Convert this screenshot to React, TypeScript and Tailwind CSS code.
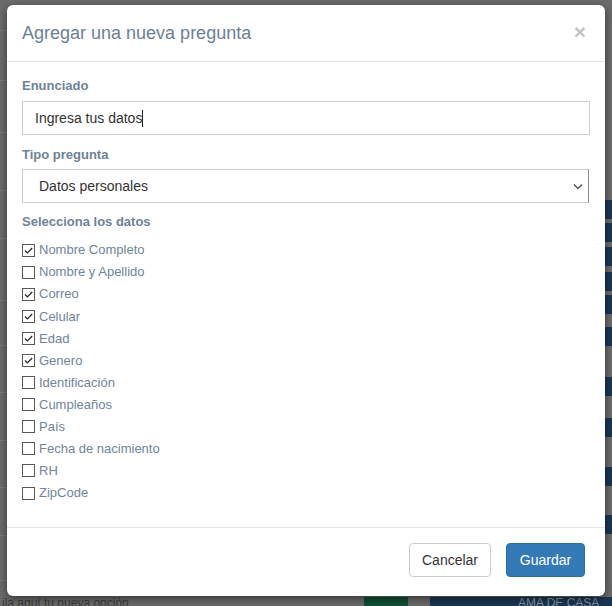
import { useState } from "react";

const campos = [
  { label: "Nombre Completo", checked: true },
  { label: "Nombre y Apellido", checked: false },
  { label: "Correo", checked: true },
  { label: "Celular", checked: true },
  { label: "Edad", checked: true },
  { label: "Genero", checked: true },
  { label: "Identificación", checked: false },
  { label: "Cumpleaños", checked: false },
  { label: "País", checked: false },
  { label: "Fecha de nacimiento", checked: false },
  { label: "RH", checked: false },
  { label: "ZipCode", checked: false },
];

// dark blue rows of the page behind the overlay (right edge)
const blueRows = [200, 223, 247, 272, 295, 327, 377, 418, 467, 515];
const leftRows = [30, 80, 132, 190, 238, 300, 345, 392, 440, 487, 535, 580];

function Checkbox({ checked }: { checked: boolean }) {
  return (
    <span className="w-[13px] h-[13px] border border-[#5a5a5a] bg-white flex items-center justify-center shrink-0">
      {checked && (
        <svg width="11" height="11" viewBox="0 0 11 11">
          <path d="M2 5.5 L4.4 7.9 L9.2 3" fill="none" stroke="#2a2a2a" strokeWidth="1.3" />
        </svg>
      )}
    </span>
  );
}

export default function App() {
  const [items, setItems] = useState(campos);

  return (
    <div
      className="relative w-[612px] h-[606px] overflow-hidden bg-[#6b6b6b]"
      style={{ fontFamily: '"Liberation Sans", Arial, sans-serif' }}
    >
      {/* Page behind the overlay */}
      {leftRows.map((y) => (
        <div key={y} className="absolute left-0 w-[10px] h-px bg-[#7a7a7a]" style={{ top: y }} />
      ))}
      {blueRows.map((y) => (
        <div key={y} className="absolute right-0 w-[8px] h-[19px] bg-[#1b3652]" style={{ top: y }} />
      ))}
      <div className="absolute left-0 bottom-0 h-[9px] w-full flex">
        <div className="w-[364px] text-[12px] leading-[12px] text-[#3a3a3a] pl-[2px] overflow-hidden whitespace-nowrap">
          ila aquí tu nueva opción
        </div>
        <div className="w-[44px] bg-[#0f4f35]" />
        <div className="w-[22px]" />
        <div className="flex-1 bg-[#1b3652] text-[12px] leading-[12px] text-[#8796a8] pl-[88px]">AMA DE CASA</div>
      </div>

      {/* Modal */}
      <div className="absolute left-[7px] top-[5px] w-[598px] h-[591px] bg-white rounded-[6px] shadow-[0_3px_9px_rgba(0,0,0,0.5)] flex flex-col">
        <div className="h-[57px] shrink-0 border-b border-[#e5e5e5] px-[15px] flex items-center justify-between">
          <h4 className="text-[18px] text-[#6c7f96]">Agregar una nueva pregunta</h4>
          <button className="text-[21px] font-bold text-[#c4c4c4] leading-none mr-[4px] -mt-[4px]">×</button>
        </div>

        <div className="flex-1 px-[15px] pt-[14px]">
          <label className="block text-[13px] font-bold leading-[20px] text-[#6f8298] mb-[5px]">Enunciado</label>
          <div className="h-[34px] border border-[#ccc] px-[12px] flex items-center text-[14px] text-[#333] mb-[10px]">
            Ingresa tus datos
            <span className="w-px h-[17px] bg-[#222]" />
          </div>

          <label className="block text-[13px] font-bold leading-[20px] text-[#6f8298] mb-[4px]">Tipo pregunta</label>
          <div className="h-[34px] w-[567px] border border-[#ccc] border-r-[#8a8a8a] pl-[16px] pr-[5px] flex items-center justify-between text-[14px] text-[#333] mb-[9px]">
            Datos personales
            <svg width="10" height="7" viewBox="0 0 10 7">
              <path d="M1 1.5 L5 5.5 L9 1.5" fill="none" stroke="#555" strokeWidth="1.5" />
            </svg>
          </div>

          <label className="block text-[13px] font-bold leading-[20px] text-[#6f8298] mb-[7px]">Selecciona los datos</label>
          <div className="flex flex-col">
            {items.map((c, i) => (
              <div
                key={c.label}
                className="h-[22.1px] flex items-center gap-[4px] cursor-pointer"
                onClick={() =>
                  setItems(items.map((it, j) => (j === i ? { ...it, checked: !it.checked } : it)))
                }
              >
                <Checkbox checked={c.checked} />
                <span className="text-[13px] text-[#71849a]">{c.label}</span>
              </div>
            ))}
          </div>
        </div>

        <div className="h-[69px] shrink-0 border-t border-[#e5e5e5] pr-[20px] pt-[15px] flex justify-end gap-[15px]">
          <button className="h-[34px] w-[82px] border border-[#ccc] rounded-[4px] bg-white text-[14px] text-[#333]">
            Cancelar
          </button>
          <button className="h-[34px] w-[79px] border border-[#2e6da4] rounded-[4px] bg-[#337ab7] text-[14px] text-white">
            Guardar
          </button>
        </div>
      </div>
    </div>
  );
}
